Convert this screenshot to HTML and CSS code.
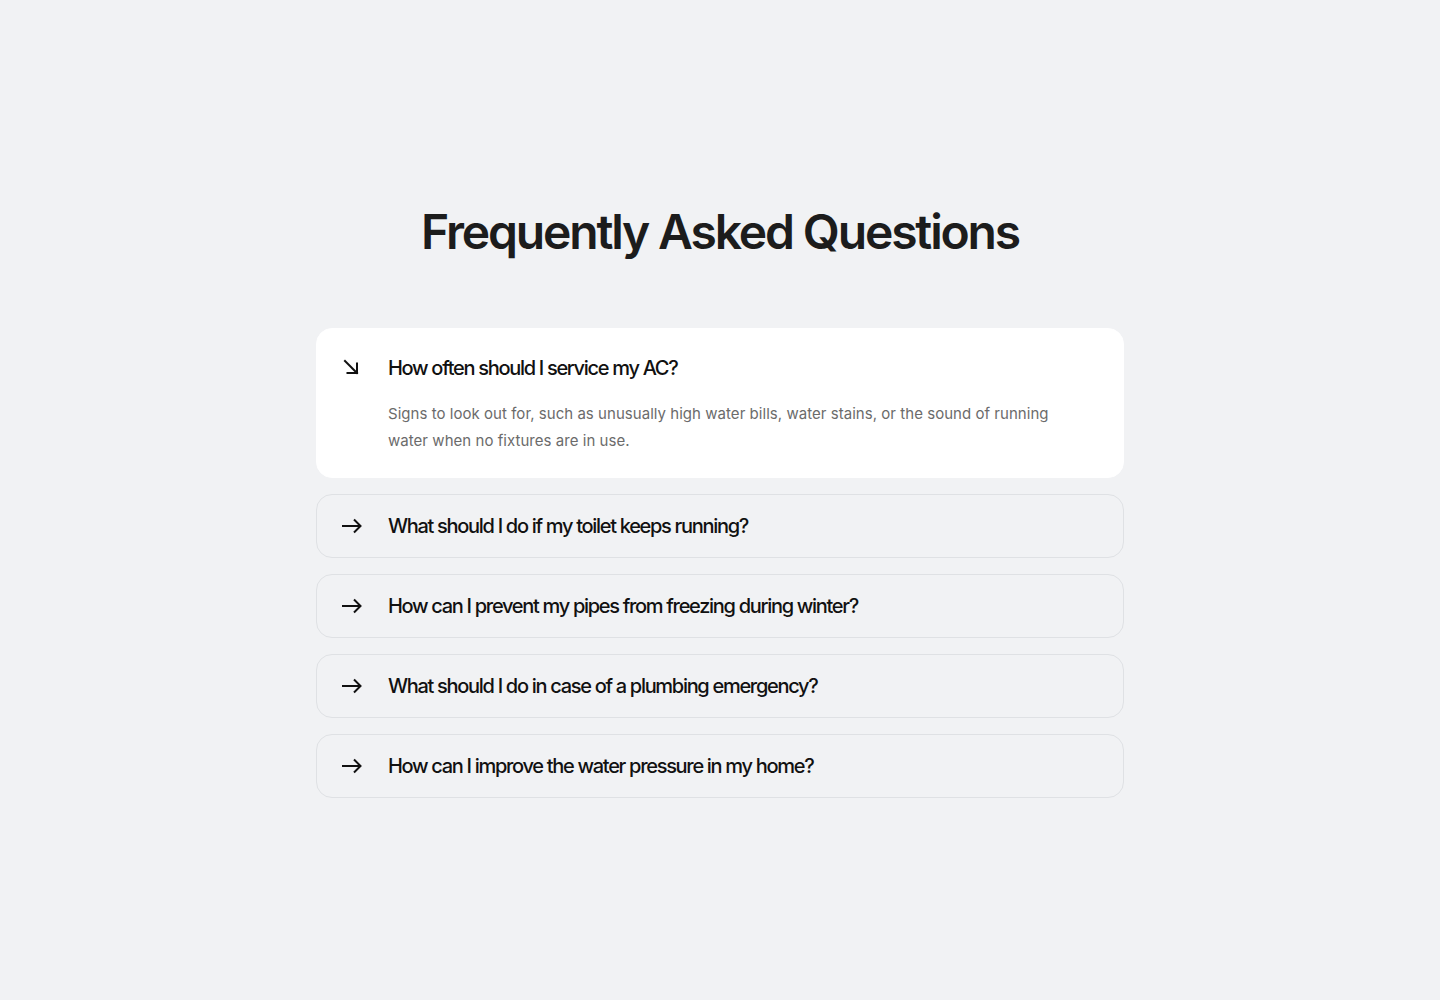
FILE: index.html
```html
<!DOCTYPE html>
<html lang="en">
<head>
<meta charset="utf-8">
<title>FAQ</title>
<link rel="stylesheet" href="styles.css">
</head>
<body>
<main class="faq">
  <h1 class="faq-title">Frequently Asked Questions</h1>
  <div class="faq-list">
    <div class="faq-item open">
      <div class="faq-q">
        <svg class="faq-icon" viewBox="0 0 24 24" fill="none" stroke="#111" stroke-width="2" stroke-linecap="square"><path d="M5 5 L17 17"/><path d="M7.5 17 H17 V7.5"/></svg>
        <span>How often should I service my AC?</span>
      </div>
      <p class="faq-a">Signs to look out for, such as unusually high water bills, water stains, or the sound of running water when no fixtures are in use.</p>
    </div>
    <div class="faq-item">
      <div class="faq-q">
        <svg class="faq-icon" viewBox="0 0 24 24" fill="none" stroke="#111" stroke-width="2"><path d="M2 12 H20.5"/><path d="M14 5.5 L20.5 12 L14 18.5"/></svg>
        <span>What should I do if my toilet keeps running?</span>
      </div>
    </div>
    <div class="faq-item">
      <div class="faq-q">
        <svg class="faq-icon" viewBox="0 0 24 24" fill="none" stroke="#111" stroke-width="2"><path d="M2 12 H20.5"/><path d="M14 5.5 L20.5 12 L14 18.5"/></svg>
        <span>How can I prevent my pipes from freezing during winter?</span>
      </div>
    </div>
    <div class="faq-item">
      <div class="faq-q">
        <svg class="faq-icon" viewBox="0 0 24 24" fill="none" stroke="#111" stroke-width="2"><path d="M2 12 H20.5"/><path d="M14 5.5 L20.5 12 L14 18.5"/></svg>
        <span>What should I do in case of a plumbing emergency?</span>
      </div>
    </div>
    <div class="faq-item">
      <div class="faq-q">
        <svg class="faq-icon" viewBox="0 0 24 24" fill="none" stroke="#111" stroke-width="2"><path d="M2 12 H20.5"/><path d="M14 5.5 L20.5 12 L14 18.5"/></svg>
        <span>How can I improve the water pressure in my home?</span>
      </div>
    </div>
  </div>
</main>
</body>
</html>
```
FILE: styles.css
```css
* { box-sizing: border-box; }
html, body { margin: 0; padding: 0; }
body {
  background: #f1f2f4;
  font-family: Inter, "Noto Sans", sans-serif;
  color: #1a1a1a;
  min-height: 1000px;
}
.faq {
  width: 808px;
  margin: 0 auto;
  padding-top: 202px;
}
.faq-title {
  margin: 0 0 66px;
  text-align: center;
  font-size: 48px;
  line-height: 60px;
  font-weight: 600;
  letter-spacing: -0.045em;
  color: #1c1c1c;
}
.faq-list {
  display: flex;
  flex-direction: column;
  gap: 16px;
}
.faq-item {
  border: 1px solid #dfe1e4;
  border-radius: 16px;
  padding: 19px 24px 19px 23px;
}
.faq-item.open {
  background: #ffffff;
  border-color: #ffffff;
  padding: 27px 24px 23px 23px;
}
.faq-q {
  display: flex;
  align-items: center;
  gap: 24px;
  height: 24px;
  font-size: 20px;
  line-height: 24px;
  font-weight: 500;
  letter-spacing: -0.065em;
  color: #111;
}
.faq-icon {
  width: 24px;
  height: 24px;
  flex: none;
}
.faq-a {
  margin: 20px 0 0 48px;
  max-width: 680px;
  font-size: 15px;
  line-height: 27px;
  letter-spacing: 0.04px;
  color: #6b6b6b;
}
```
